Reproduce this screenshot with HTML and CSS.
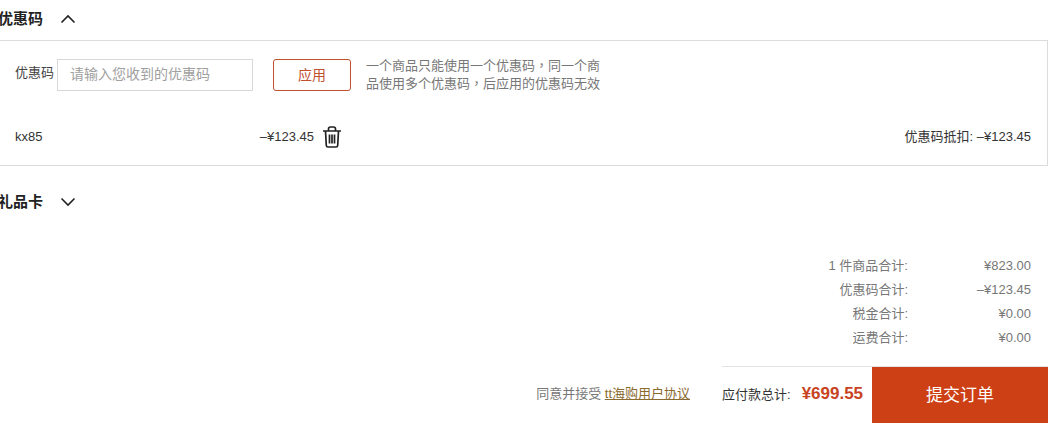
FILE: index.html
```html
<!DOCTYPE html>
<html lang="zh-CN">
<head>
  <meta charset="UTF-8">
  <title>结算</title>
  <link rel="stylesheet" href="styles.css">
</head>
<body>
  <div class="page">
    <div class="section-title section-title-coupon">
      <span>优惠码</span>
      <svg class="chevron" width="16" height="10" viewBox="0 0 16 10"><path d="M1.500 8.500 8 2l6.500 6.500"/></svg>
    </div>
    <div class="coupon-box">
      <div class="coupon-form">
        <label class="coupon-label" for="coupon">优惠码</label>
        <input class="coupon-input" id="coupon" type="text" placeholder="请输入您收到的优惠码">
        <button class="apply-btn">应用</button>
        <p class="coupon-note" lang="zh-TW">一个商品只能使用一个优惠码，同一个商品使用多个优惠码，后应用的优惠码无效</p>
      </div>
      <div class="coupon-row">
        <span class="coupon-code">kx85</span>
        <span class="coupon-amount">–¥123.45</span>
        <svg class="trash" width="20" height="22" viewBox="0 0 20 22">
          <path d="M1 5h18M3.500 5l.8 14.500q.1 1.500 1.700 1.500h8q1.600 0 1.700-1.500L16.500 5M6.500 5V3q0-2 2-2h3q2 0 2 2v2M7.500 8.500v9M10 8.500v9M12.500 8.500v9"/>
        </svg>
        <span class="coupon-total">优惠码抵扣: –¥123.45</span>
      </div>
    </div>
    <div class="section-title section-title-gift">
      <span>礼品卡</span>
      <svg class="chevron" width="16" height="10" viewBox="0 0 16 10"><path d="M1.500 1.500 8 8l6.500-6.500"/></svg>
    </div>
    <div class="summary">
      <div class="summary-row"><span class="summary-label">1 件商品合计:</span><span class="summary-value">¥823.00</span></div>
      <div class="summary-row"><span class="summary-label">优惠码合计:</span><span class="summary-value">–¥123.45</span></div>
      <div class="summary-row"><span class="summary-label">税金合计:</span><span class="summary-value">¥0.00</span></div>
      <div class="summary-row"><span class="summary-label">运费合计:</span><span class="summary-value">¥0.00</span></div>
    </div>
    <div class="checkout">
      <div class="agreement">同意并接受 <a href="#">tt海购用户协议</a></div>
      <div class="checkout-main">
        <span class="total-label">应付款总计:</span>
        <span class="total-price">¥699.55</span>
        <button class="submit-btn">提交订单</button>
      </div>
    </div>
  </div>
</body>
</html>
```

FILE: styles.css
```css
html, body {
  margin: 0;
  padding: 0;
  overflow: hidden;
}
body {
  background: #fff;
  color: #333;
  font-family: "Liberation Sans", "Noto Sans CJK SC", sans-serif;
  font-size: 13px;
}
.page {
  width: 1050px;
  margin-left: -2px;
}
.section-title {
  display: flex;
  align-items: center;
  gap: 17px;
  font-size: 15px;
  font-weight: bold;
  color: #222;
  line-height: 20px;
}
.section-title-coupon {
  height: 40px;
  padding-bottom: 2px;
  box-sizing: border-box;
}
.section-title-gift {
  padding-top: 26px;
}
.chevron {
  fill: none;
  stroke: #222;
  stroke-width: 1.6;
}
.coupon-box {
  border: 1px solid #dcdcdc;
  padding: 18px 16px 0 16px;
  height: 106px;
}
.coupon-form {
  display: flex;
  align-items: center;
  height: 32px;
}
.coupon-label {
  width: 42px;
  padding-bottom: 7px;
  color: #444;
}
.coupon-input {
  width: 196px;
  height: 32px;
  box-sizing: border-box;
  border: 1px solid #d8d8d8;
  padding: 0 12px 2px;
  font: inherit;
  font-size: 14px;
  outline: none;
}
.coupon-input::placeholder {
  color: #a0a0a0;
}
.apply-btn {
  width: 78px;
  height: 32px;
  margin-left: 20px;
  padding-bottom: 3px;
  background: #fff;
  border: 1px solid #c0502e;
  border-radius: 3px;
  color: #c0502e;
  font: inherit;
  font-size: 14px;
}
.coupon-note {
  width: 240px;
  margin: 0 0 0 15px;
  line-height: 18px;
  color: #777;
  font-family: "Liberation Sans", "Noto Sans CJK TC", sans-serif;
}
.coupon-row {
  display: flex;
  align-items: center;
  height: 24px;
  margin-top: 33px;
}
.coupon-code {
  width: 200px;
}
.coupon-amount {
  width: 99px;
  text-align: right;
}
.trash {
  margin-left: 8px;
  margin-top: 2px;
  fill: none;
  stroke: #222;
  stroke-width: 1.7;
}
.coupon-total {
  margin-left: auto;
  padding-bottom: 2px;
}
.summary {
  margin-top: 42px;
  padding-right: 17px;
}
.summary-row {
  display: flex;
  justify-content: flex-end;
  line-height: 24px;
  color: #777;
}
.summary-value {
  width: 123px;
  text-align: right;
}
.checkout {
  display: flex;
  justify-content: flex-end;
  align-items: center;
  margin-top: 16px;
}
.agreement {
  margin-right: 32px;
  padding-bottom: 4px;
  color: #777;
}
.agreement a {
  color: #8a6a2f;
}
.checkout-main {
  display: flex;
  align-items: center;
  width: 326px;
  border-top: 1px solid #e4e4e4;
}
.total-label {
  padding-bottom: 4px;
  color: #333;
}
.total-price {
  margin-left: 11px;
  padding-bottom: 2px;
  font-size: 17px;
  font-weight: bold;
  color: #c8431f;
}
.submit-btn {
  width: 176px;
  height: 56px;
  margin-left: auto;
  padding-bottom: 4px;
  background: #cd3f14;
  border: 0;
  color: #fff;
  font: inherit;
  font-size: 17px;
}
```
